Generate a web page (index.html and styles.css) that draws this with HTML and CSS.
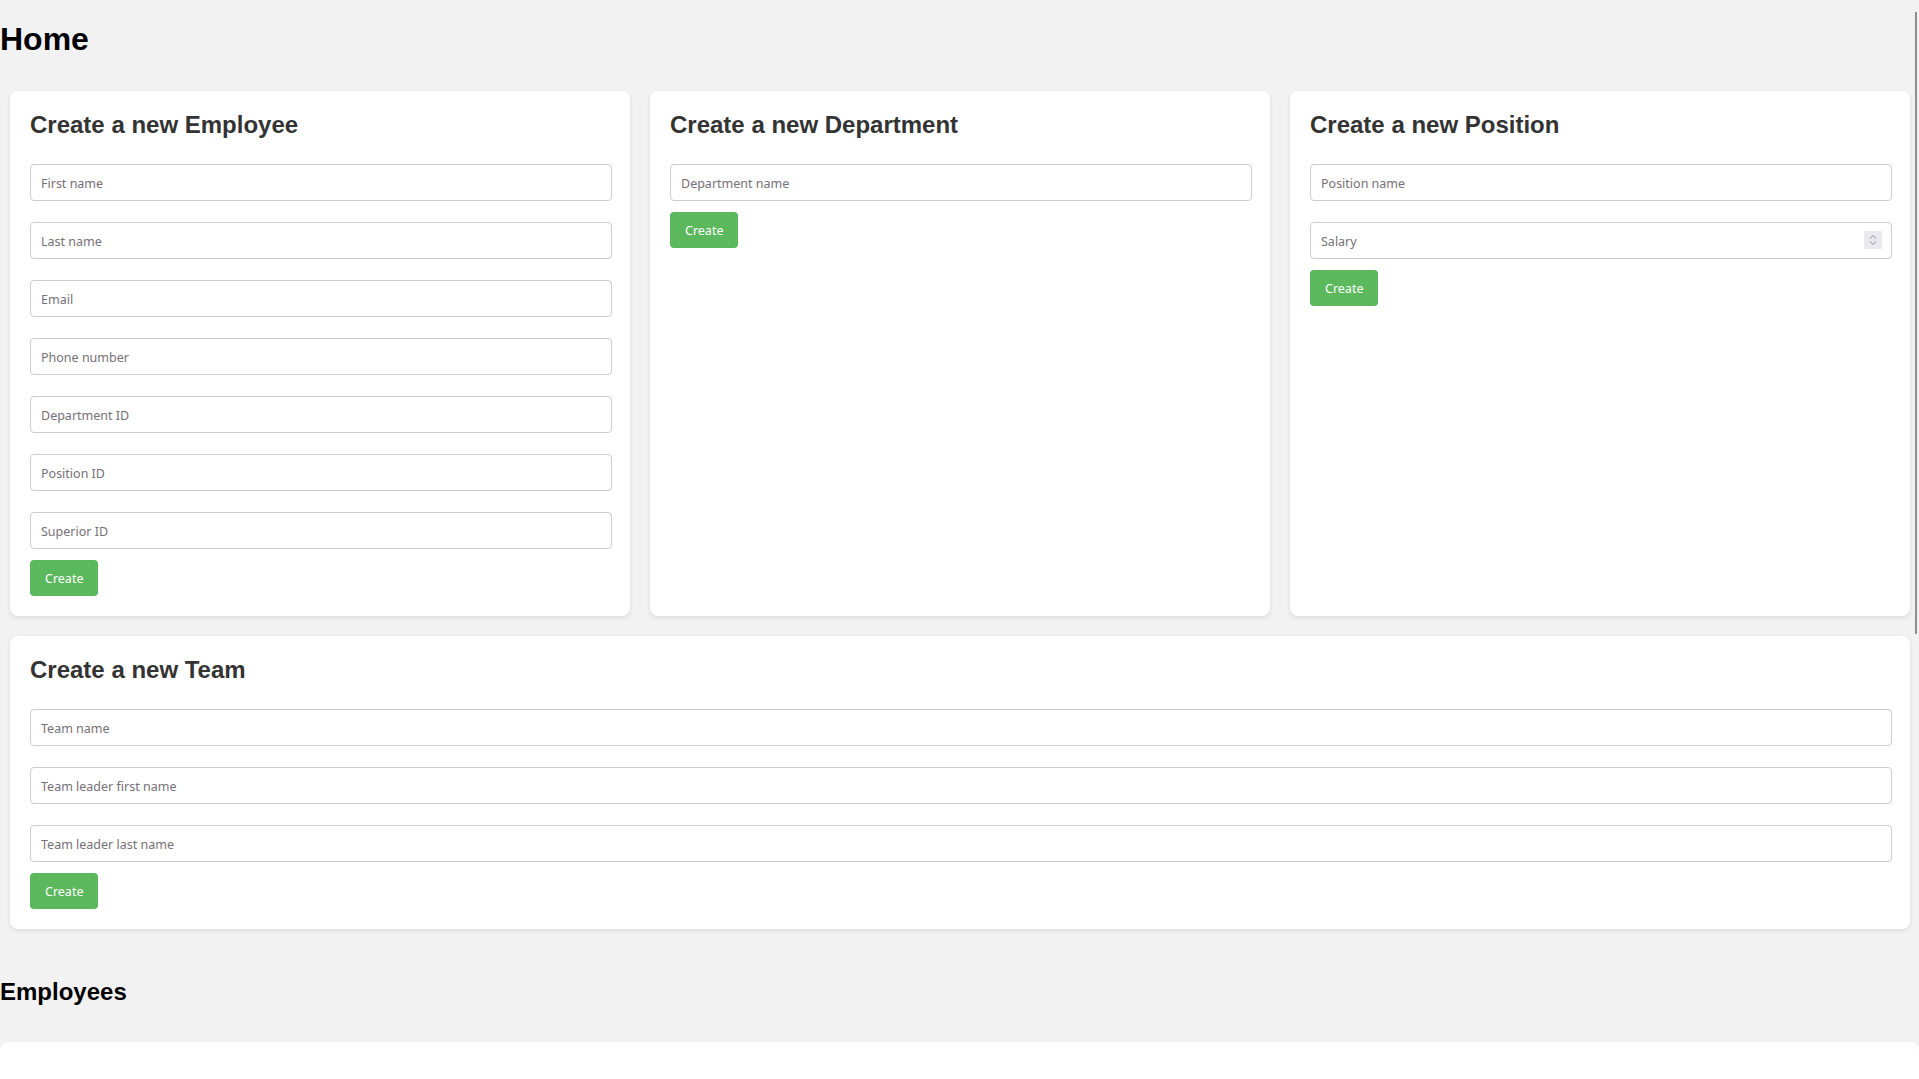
FILE: index.html
```html
<!DOCTYPE html>
<html lang="en">
<head>
<meta charset="utf-8">
<title>Home</title>
<link rel="stylesheet" href="styles.css">
</head>
<body>
<div class="scroll-thumb"></div>
<h1 class="page-title">Home</h1>
<main class="forms">
  <div class="row">
    <section class="card">
      <h2 class="card-title">Create a new Employee</h2>
      <form class="form">
        <div class="fields">
          <input class="field" type="text" placeholder="First name">
          <input class="field" type="text" placeholder="Last name">
          <input class="field" type="email" placeholder="Email">
          <input class="field" type="text" placeholder="Phone number">
          <input class="field" type="text" placeholder="Department ID">
          <input class="field" type="text" placeholder="Position ID">
          <input class="field" type="text" placeholder="Superior ID">
        </div>
        <button class="btn" type="button">Create</button>
      </form>
    </section>
    <section class="card">
      <h2 class="card-title">Create a new Department</h2>
      <form class="form">
        <div class="fields">
          <input class="field" type="text" placeholder="Department name">
        </div>
        <button class="btn" type="button">Create</button>
      </form>
    </section>
    <section class="card">
      <h2 class="card-title">Create a new Position</h2>
      <form class="form">
        <div class="fields">
          <input class="field" type="text" placeholder="Position name">
          <div class="number-wrap">
            <input class="field number" type="number" placeholder="Salary">
            <span class="spinner">
              <svg width="18" height="18" viewBox="0 0 18 18" aria-hidden="true">
                <path d="M6 7.5 L9 4.5 L12 7.5" fill="none" stroke="#8a8a94" stroke-width="1"/>
                <path d="M6 10.5 L9 13.5 L12 10.5" fill="none" stroke="#8a8a94" stroke-width="1"/>
              </svg>
            </span>
          </div>
        </div>
        <button class="btn" type="button">Create</button>
      </form>
    </section>
  </div>
  <section class="card">
    <h2 class="card-title">Create a new Team</h2>
    <form class="form">
      <div class="fields">
        <input class="field" type="text" placeholder="Team name">
        <input class="field" type="text" placeholder="Team leader first name">
        <input class="field" type="text" placeholder="Team leader last name">
      </div>
      <button class="btn" type="button">Create</button>
    </form>
  </section>
</main>
<h2 class="section-title">Employees</h2>
<section class="list-card"></section>
</body>
</html>
```

FILE: styles.css
```css
html {
  scrollbar-width: none;
}
html::-webkit-scrollbar {
  display: none;
}
body {
  margin: 0;
  background: #f2f2f2;
  font-family: "Liberation Sans", Arial, sans-serif;
  color: #000;
}
.scroll-thumb {
  position: fixed;
  top: 12px;
  right: 2px;
  width: 2px;
  height: 622px;
  background: #8e8e8e;
}
.page-title {
  font-size: 32px;
  line-height: 37px;
  font-weight: bold;
  margin: 21px 0 23px;
}
.forms {
  display: flex;
  flex-direction: column;
  gap: 20px;
  padding: 10px 9px 10px 10px;
}
.row {
  display: flex;
  gap: 20px;
}
.row .card {
  flex: 1 1 0;
  min-width: 0;
}
.card {
  background: #fff;
  border-radius: 8px;
  padding: 20px 18px 20px 20px;
  box-shadow: 0 2px 5px rgba(0, 0, 0, 0.09);
}
.card-title {
  font-size: 24px;
  line-height: 28px;
  font-weight: bold;
  color: #333;
  margin: 0 0 25px;
}
.form {
  display: flex;
  flex-direction: column;
  align-items: flex-start;
}
.fields {
  display: flex;
  flex-direction: column;
  gap: 21px;
  width: 100%;
}
.field {
  display: block;
  box-sizing: border-box;
  width: 100%;
  height: 37px;
  margin: 0;
  padding: 1px 10px 0;
  border: 1px solid #ccc;
  border-radius: 4px;
  background: #fff;
  font-family: "Noto Sans", "DejaVu Sans", sans-serif;
  font-size: 12.5px;
  color: #333;
  outline: none;
}
.field::placeholder {
  color: #776f78;
}
.number {
  -moz-appearance: textfield;
}
.number::-webkit-inner-spin-button,
.number::-webkit-outer-spin-button {
  -webkit-appearance: none;
  margin: 0;
}
.number-wrap {
  position: relative;
  width: 100%;
}
.spinner {
  position: absolute;
  top: 9px;
  right: 10px;
  width: 18px;
  height: 18px;
  background: #e9e9ef;
  display: flex;
}
.btn {
  margin-top: 11px;
  height: 36px;
  padding: 0 15px;
  border: none;
  border-radius: 4px;
  background: #5cb85c;
  color: #fff;
  font-family: "Noto Sans", "DejaVu Sans", sans-serif;
  font-size: 12.5px;
  cursor: pointer;
}
.section-title {
  font-size: 24px;
  line-height: 28px;
  font-weight: bold;
  margin: 39px 0 36px;
}
.list-card {
  background: #fff;
  border-radius: 8px;
  height: 200px;
  box-shadow: 0 2px 5px rgba(0, 0, 0, 0.09);
}
```
